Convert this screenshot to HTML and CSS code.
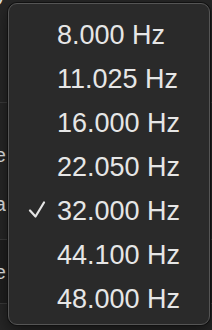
FILE: index.html
```html
<html lang="en">
<head>
    <meta charset="UTF-8">
    <meta name="viewport" content="width=device-width, initial-scale=1.0">
    <title>Sample Rate</title>
    <link rel="stylesheet" href="styles.css">
</head>
<body>
    <div class="panel">
        <div class="row row-top">
            <div class="label">Quality</div>
        </div>
        <div class="row row-mid">
            <div class="label label-e">Sample Rate</div>
            <div class="label label-a">Format Data</div>
        </div>
        <div class="row row-low">
            <div class="label">Volume</div>
        </div>
        <div class="row row-end"></div>
    </div>

    <div class="menu">
        <div class="item">8.000 Hz</div>
        <div class="item">11.025 Hz</div>
        <div class="item">16.000 Hz</div>
        <div class="item">22.050 Hz</div>
        <div class="item checked">
            <svg class="check" width="18" height="18" viewBox="0 0 18 18">
                <polyline points="2,9.5 7.5,15.5 16,1.5" fill="none" stroke="#e4e4e4" stroke-width="2.2" stroke-linecap="round" stroke-linejoin="round"/>
            </svg>
            32.000 Hz
        </div>
        <div class="item">44.100 Hz</div>
        <div class="item">48.000 Hz</div>
    </div>
</body>
</html>
```

FILE: styles.css
```css
body {
    margin: 0;
    padding: 0;
    width: 212px;
    height: 330px;
    overflow: hidden;
    background: #232323;
    font-family: "Liberation Sans", Arial, sans-serif;
    color: #e4e4e4;
    position: relative;
}
.panel {
    width: 212px;
    height: 330px;
    display: flex;
    flex-direction: column;
}
.row {
    border-bottom: 1px solid #3a3a3a;
    position: relative;
}
.row-top {
    height: 102px;
    background: #262626;
}
.row-mid {
    height: 136px;
    background: #262626;
}
.row-low {
    height: 63px;
    background: #1f1f1f;
}
.row-end {
    flex: 1;
    border-bottom: none;
    background: #262626;
}
.label {
    width: 6px;
    overflow: hidden;
    display: flex;
    justify-content: flex-end;
    white-space: nowrap;
    font-size: 20px;
}
.label-e {
    margin-top: 41px;
}
.label-a {
    margin-top: 26px;
}
.row-low .label {
    margin-top: 21px;
}
.row-top .label {
    margin-top: -17px;
}
.menu {
    position: absolute;
    left: 8px;
    top: 3px;
    width: 202px;
    height: 322px;
    box-sizing: border-box;
    padding: 9px 0 6px 0;
    background: #2a2a2a;
    border: 1px solid #555555;
    border-radius: 9px;
    box-shadow: 0 0 0 1px #111111, 0 6px 16px rgba(0, 0, 0, 0.5);
}
.item {
    height: 44px;
    display: flex;
    align-items: center;
    padding-left: 48px;
    font-size: 27px;
    color: #e6e6e6;
    position: relative;
}
.check {
    position: absolute;
    left: 19px;
    top: 12px;
}
```
